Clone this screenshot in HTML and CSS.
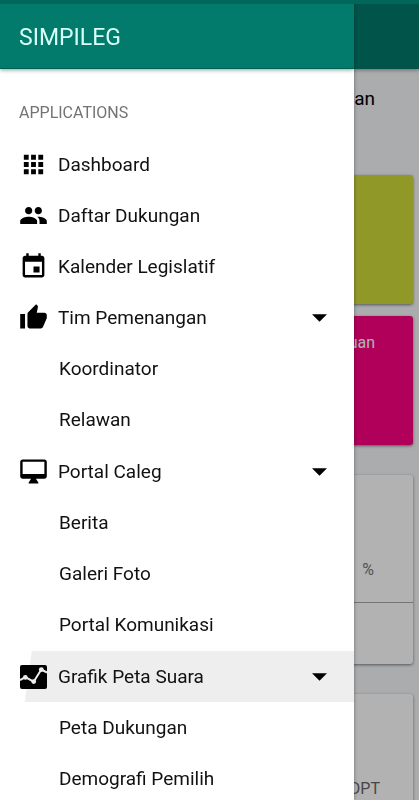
FILE: index.html
```html
<!DOCTYPE html>
<html lang="id">
<head>
<meta charset="utf-8">
<meta name="viewport" content="width=device-width, initial-scale=1">
<title>SIMPILEG</title>
<link rel="stylesheet" href="styles.css">
</head>
<body>
<main class="page">
  <div class="appbar"></div>
  <p class="intro">an</p>
  <section class="card card-lime"></section>
  <section class="card card-pink"><p class="card-title">uan</p></section>
  <section class="card card-stat">
    <div class="stat-body">%</div>
    <div class="stat-foot"></div>
  </section>
  <section class="card card-dpt">DPT</section>
</main>
<div class="scrim"></div>
<aside class="drawer">
  <header class="drawer-head"><h1>SIMPILEG</h1></header>
  <h2 class="drawer-label">APPLICATIONS</h2>
  <nav class="menu">
    <div class="group">
      <a class="item" href="#">
        <svg class="icon" viewBox="0 0 24 24"><path d="M4 8h4V4H4v4zm6 12h4v-4h-4v4zm-6 0h4v-4H4v4zm0-6h4v-4H4v4zm6 0h4v-4h-4v4zm6-10v4h4V4h-4zm-6 4h4V4h-4v4zm6 6h4v-4h-4v4zm0 6h4v-4h-4v4z"/></svg>
        <span>Dashboard</span>
      </a>
      <a class="item" href="#">
        <svg class="icon" viewBox="0 0 24 24"><path d="M16 11c1.66 0 2.99-1.34 2.99-3S17.66 5 16 5c-1.66 0-3 1.34-3 3s1.34 3 3 3zm-8 0c1.66 0 2.99-1.34 2.99-3S9.66 5 8 5C6.34 5 5 6.34 5 8s1.34 3 3 3zm0 2c-2.33 0-7 1.17-7 3.5V19h14v-2.5c0-2.33-4.67-3.5-7-3.5zm8 0c-.29 0-.62.02-.97.05 1.16.84 1.97 1.97 1.97 3.45V19h6v-2.5c0-2.33-4.67-3.5-7-3.5z"/></svg>
        <span>Daftar Dukungan</span>
      </a>
      <a class="item" href="#">
        <svg class="icon" viewBox="0 0 24 24"><path d="M17 12h-5v5h5v-5zM16 1v2H8V1H6v2H5c-1.11 0-1.99.9-1.99 2L3 19c0 1.1.89 2 2 2h14c1.1 0 2-.9 2-2V5c0-1.1-.9-2-2-2h-1V1h-2zm3 18H5V8h14v11z"/></svg>
        <span>Kalender Legislatif</span>
      </a>
      <button class="item" type="button" aria-expanded="true">
        <svg class="icon" viewBox="0 0 24 24"><path d="M1 21h4V9H1v12zm22-11c0-1.1-.9-2-2-2h-6.31l.95-4.57.03-.32c0-.41-.17-.79-.44-1.06L14.17 1 7.59 7.59C7.22 7.95 7 8.45 7 9v10c0 1.1.9 2 2 2h9c.83 0 1.54-.5 1.84-1.22l3.02-7.05c.09-.23.14-.47.14-.73v-2z"/></svg>
        <span>Tim Pemenangan</span>
        <svg class="caret" viewBox="0 0 16 8"><path d="M0 0h16L8 8z"/></svg>
      </button>
      <a class="item sub" href="#">Koordinator</a>
      <a class="item sub" href="#">Relawan</a>
    </div>
    <div class="group">
      <button class="item" type="button" aria-expanded="true">
        <svg class="icon" viewBox="0 0 24 24"><path d="M21 2H3c-1.1 0-2 .9-2 2v12c0 1.1.9 2 2 2h7l-2 3v1h8v-1l-2-3h7c1.1 0 2-.9 2-2V4c0-1.1-.9-2-2-2zm0 12H3V4h18v10z"/></svg>
        <span>Portal Caleg</span>
        <svg class="caret" viewBox="0 0 16 8"><path d="M0 0h16L8 8z"/></svg>
      </button>
      <a class="item sub" href="#">Berita</a>
      <a class="item sub" href="#">Galeri Foto</a>
      <a class="item sub" href="#">Portal Komunikasi</a>
    </div>
    <div class="group">
      <button class="item pressed" type="button" aria-expanded="true">
        <svg class="icon" viewBox="0 0 29 29"><rect x="1" y="3" width="27" height="24" rx="2"/><path class="trend" d="M1 18.2l5.3-3 8.4 4.5 7.6-12.2 5.7 3"/><g class="dots"><circle cx="6.3" cy="15.4" r="2.4"/><circle cx="14.7" cy="19.6" r="2.4"/><circle cx="22.3" cy="7.6" r="2.4"/></g></svg>
        <span>Grafik Peta Suara</span>
        <svg class="caret" viewBox="0 0 16 8"><path d="M0 0h16L8 8z"/></svg>
      </button>
      <a class="item sub" href="#">Peta Dukungan</a>
      <a class="item sub" href="#">Demografi Pemilih</a>
    </div>
  </nav>
</aside>
<div class="statusbar"></div>
</body>
</html>
```
FILE: styles.css
```css
* {
  box-sizing: border-box;
}

body {
  margin: 0;
  height: 100vh;
  overflow: hidden;
  background: #f4f6f9;
  color: #111;
  font-family: Roboto, sans-serif;
  font-size: 19px;
  line-height: 24px;
}

h1, h2, p {
  margin: 0;
  font-weight: 400;
}

.statusbar {
  position: fixed;
  top: 0;
  left: 0;
  right: 0;
  height: 4px;
  background: #00675a;
}

/* Dashboard behind the drawer */
.page {
  display: flex;
  flex-direction: column;
  text-align: right;
}

.appbar {
  height: 69px;
  background: #00796b;
  box-shadow: 0 1px 4px rgba(0, 0, 0, 0.4);
}

.intro {
  padding: 18px 44px 64px;
  color: #000;
}

.card {
  margin: 0 6px;
  border-radius: 3px;
  background: #fff;
  box-shadow: 0 1px 3px rgba(0, 0, 0, 0.5);
}

.card-lime {
  height: 129px;
  background: #cfdc3a;
}

.card-pink {
  height: 129px;
  margin-top: 12px;
  padding: 15px 38px;
  background: #fc0082;
}

.card-title {
  color: #fff;
  font-size: 16px;
}

.card-stat {
  margin-top: 30px;
  color: #777;
  font-size: 16px;
}

.stat-body {
  padding: 83px 39px 20px;
  border-bottom: 1px solid #aaa;
}

.stat-foot {
  height: 61px;
}

.card-dpt {
  margin-top: 30px;
  padding: 83px 33px 20px;
  color: #666;
  font-size: 16px;
}

.scrim {
  position: fixed;
  inset: 0;
  background: rgba(0, 0, 0, 0.3);
}

/* Navigation drawer */
.drawer {
  position: fixed;
  top: 0;
  bottom: 0;
  left: 0;
  width: calc(100% - 65px);
  overflow: hidden;
  background: #fff;
  box-shadow: 0 0 4px rgba(0, 0, 0, 0.4);
}

.drawer-head {
  height: 69px;
  padding: 24px 19px 0;
  background: #027a6c;
  border-bottom: 1px solid #005e52;
  box-shadow: 0 1px 4px rgba(0, 80, 70, 0.5);
}

.drawer-head h1 {
  color: #d8fff8;
  font-size: 23px;
  line-height: 28px;
}

.drawer-label {
  padding: 32px 19px 14px;
  color: #737373;
  font-size: 16px;
}

.menu {
  display: flex;
  flex-direction: column;
  gap: 1px;
}

.item {
  display: flex;
  align-items: center;
  gap: 10px;
  width: 100%;
  height: 51px;
  padding: 0 27px 0 19px;
  border: 0;
  background: none;
  color: #111;
  font: inherit;
  text-align: left;
  text-decoration: none;
}

.sub {
  padding-left: 59px;
}

.pressed {
  background: linear-gradient(98deg, transparent 31px, #eee 32px);
}

.icon {
  width: 29px;
  height: 29px;
  fill: #000;
}

.trend {
  fill: none;
  stroke: #eee;
  stroke-width: 2;
}

.dots {
  fill: #eee;
}

.caret {
  width: 15px;
  height: 8px;
  margin-left: auto;
}
```
